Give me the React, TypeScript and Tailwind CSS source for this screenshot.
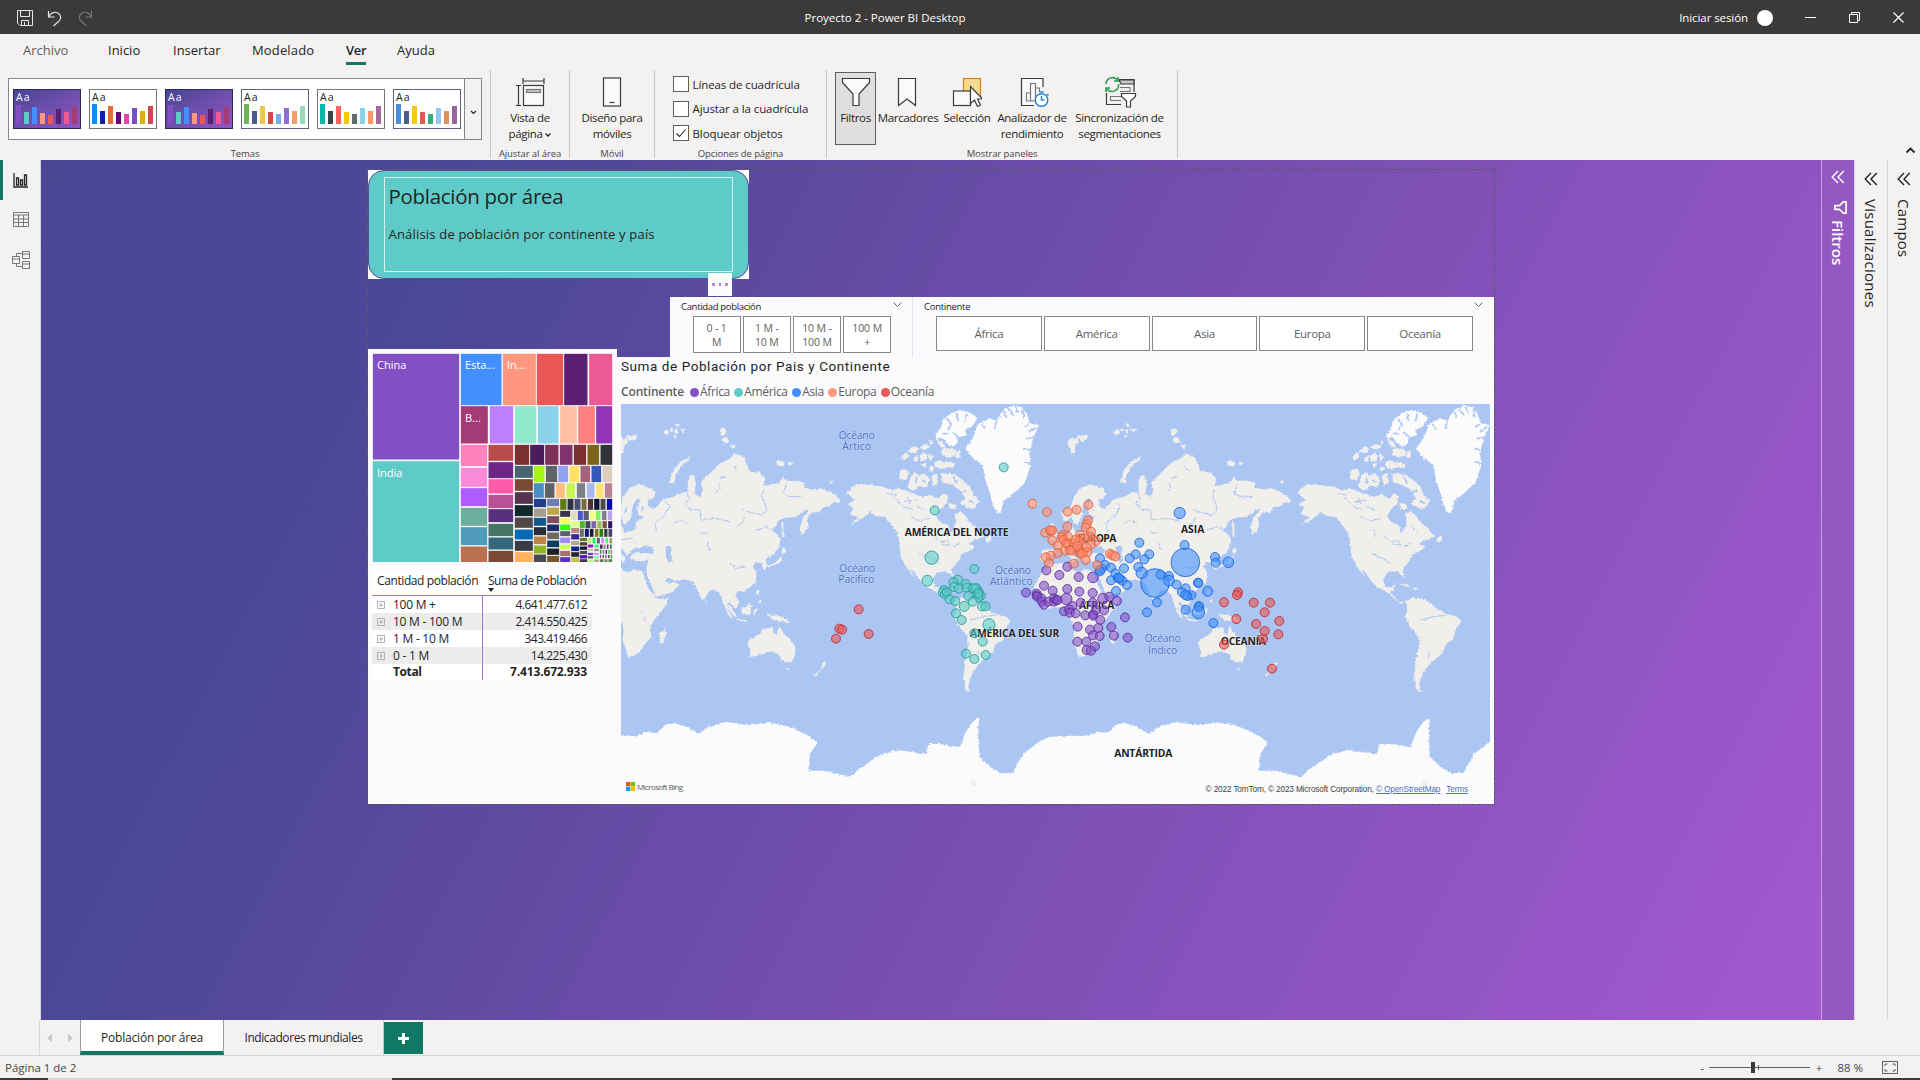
import React from "react";

const UI = "font-['Open_Sans']";

/* ---------- theme gallery ---------- */
const heights = [20, 13, 18, 12, 10, 16, 13, 18];
const themes: { dark: boolean; border: string; h: number[]; c: string[] }[] = [
  { dark: true, border: "#2f2a55", h: [19, 12, 17, 11, 9, 15, 12, 17], c: ["#8250c4", "#5ecbc8", "#438fff", "#ff977e", "#eb5757", "#5b2071", "#ec5a96", "#a43b76"] },
  { dark: false, border: "#777777", h: heights, c: ["#118dff", "#12239e", "#e66c37", "#6b007b", "#e044a7", "#744ec2", "#d9b300", "#d64550"] },
  { dark: true, border: "#2f2a55", h: [19, 12, 17, 11, 9, 15, 12, 17], c: ["#8250c4", "#5ecbc8", "#438fff", "#ff977e", "#eb5757", "#5b2071", "#ec5a96", "#a43b76"] },
  { dark: false, border: "#5c667a", h: heights, c: ["#70b35c", "#4a588a", "#ecc846", "#cd4c46", "#71afe2", "#8d6fd1", "#ee9e64", "#95dabb"] },
  { dark: false, border: "#777777", h: heights, c: ["#01b8aa", "#374649", "#fd625e", "#f2c80f", "#5f6b6d", "#8ad4eb", "#fe9666", "#a66999"] },
  { dark: false, border: "#5c667a", h: heights, c: ["#4a8ddc", "#4c5d8a", "#f3c911", "#dc5b57", "#33ae81", "#95c8f0", "#dd915f", "#9a64a0"] },
];

function Theme({ t }: { t: (typeof themes)[number] }) {
  return (
    <div
      className={
        "flex h-[40px] w-[68px] flex-col justify-between border px-[2px] pb-[4px] " +
        (t.dark ? "bg-gradient-to-br from-[#474694] to-[#9454c4] text-white" : "bg-white text-[#252423]")
      }
      style={{ borderColor: t.border }}
    >
      <span className={UI + " text-[10.5px] leading-[15px] tracking-[1px]"}>Aa</span>
      <div className="flex h-0 items-end gap-[3px]">
        {t.c.map((c, i) => (
          <span key={i} className="w-[5px] shrink-0" style={{ height: t.h[i], background: c }} />
        ))}
      </div>
    </div>
  );
}

/* ---------- ribbon pieces ---------- */
function Group({ w, label, children }: { w: number; label: string; children: React.ReactNode }) {
  return (
    <div className="flex h-[88px] flex-col border-r border-[#c8c6c4]" style={{ width: w }}>
      <div className="flex h-[76px] shrink-0 justify-center">{children}</div>
      <div className="shrink-0 text-center text-[9.5px] leading-[15px] tracking-[-0.1px] text-[#484644]">{label}</div>
    </div>
  );
}

function Big({ w, icon, lines, active, caret }: { w: number; icon: React.ReactNode; lines: string[]; active?: boolean; caret?: boolean }) {
  return (
    <div
      className={"mt-[2px] flex h-[73px] shrink-0 flex-col items-center border " + (active ? "border-[#605e5c] bg-[#e1dfdd]" : "border-transparent")}
      style={{ width: w }}
    >
      <div className="flex h-[37px] items-center">{icon}</div>
      {lines.map((l, i) => (
        <span key={l} className="flex items-center whitespace-nowrap text-[11.5px] leading-[16px] tracking-[-0.33px] text-[#252423]">
          {l}
          {caret && i === lines.length - 1 && (
            <svg width="8" height="6" viewBox="0 0 8 6" className="ml-px mt-[2px]"><path d="M1.500 1.500L4 4l2.500-2.500" fill="none" stroke="#252423" strokeWidth="1.300" /></svg>
          )}
        </span>
      ))}
    </div>
  );
}

function Check({ label, on }: { label: string; on?: boolean }) {
  return (
    <div className="flex h-[16px] items-center gap-[4px]">
      <span className="flex h-[16px] w-[16px] items-center justify-center border border-[#605e5c] bg-white">
        {on && <svg width="12" height="12" viewBox="0 0 12 12"><path d="M1.500 6.500l3 3 6-7" fill="none" stroke="#252423" strokeWidth="1.100" /></svg>}
      </span>
      <span className="whitespace-nowrap pt-px text-[11.5px] tracking-[-0.1px] text-[#252423]">{label}</span>
    </div>
  );
}

const S = { fill: "none", stroke: "#3b3a39", strokeWidth: 1.2 } as const;
const PageIcon = () => (
  <svg width="30" height="30" viewBox="0 0 30 30" {...S}>
    <path d="M8 1v6M29 1v6M8 4h21M1 8.500h5M1 28.500h5M3.500 8.500v20" />
    <rect x="8.500" y="8.500" width="20" height="20" fill="#fafafa" /><rect x="11.500" y="12.500" width="14" height="3" fill="#c8c6c4" stroke="#797775" />
  </svg>
);
const PhoneIcon = () => (
  <svg className="mr-[1px]" width="20" height="30" viewBox="0 0 20 30" {...S}><rect x="1.500" y="1" width="17" height="28" fill="#fafafa" /><path d="M7.500 25.500h5" /></svg>
);
const FunnelIcon = () => (
  <svg width="30" height="30" viewBox="0 0 30 30" {...S}><path d="M1.500 1.500h27v4L18 17v11.500h-6V17L1.500 5.500z" fill="#fafafa" /></svg>
);
const BookmarkIcon = () => (
  <svg className="mr-[2px]" width="20" height="30" viewBox="0 0 20 30" {...S}><path d="M1.500 1.500h17v27L10 22l-8.500 6.500z" fill="#fafafa" /></svg>
);
const SelectIcon = () => (
  <svg width="30" height="30" viewBox="0 0 30 30" {...S}>
    <rect x="11.500" y="1.500" width="17" height="18" fill="#f8db8f" stroke="#e07c1c" /><rect x="1.500" y="14" width="17" height="14.500" fill="#fafafa" />
    <path d="M18.500 9.500v17l4-3.500 3 6.500 3-1.500-3-6h5z" fill="#fff" />
  </svg>
);
const PerfIcon = () => (
  <svg className="ml-[3px]" width="30" height="30" viewBox="0 0 30 30" {...S}>
    <path d="M24 10V1.500H2.500v27H15" fill="#fafafa" /><path d="M7.500 24V16h4v8zM11.500 24V6.500h5V24zM16.500 18v-7h4v4" stroke="#797775" />
    <circle cx="22.500" cy="23" r="6.300" fill="#fff" stroke="#2b88d8" strokeWidth="1.500" /><path d="M22.500 19v4h3M20.500 15h4M28 17l1.500 1.500" stroke="#2b88d8" strokeWidth="1.500" />
  </svg>
);
const SyncIcon = () => (
  <svg width="34" height="32" viewBox="0 0 34 32" {...S}>
    <path d="M16 3.500h15V16M3.500 17v11.500H18" /><path d="M16 4h15v4H18z" fill="#c8c6c4" /><path d="M17 11.500h10v4H17M18 20.500H7.500v4H18" stroke="#797775" />
    <path d="M3 8a6.500 6.500 0 0 1 11.500-4M15 1v4h-4M15.500 8A6.500 6.500 0 0 1 4 13M3 16v-4h4" stroke="#2f9e54" strokeWidth="1.600" />
    <path d="M18.500 17.500h14v3L27.500 25v6h-4v-6l-5-4.500z" fill="#fff" />
  </svg>
);

/* ---------- treemap ---------- */
type R = [number, number, number, number, string, string?];
const cells: R[] = [
  [24, 27, 282, 343, "#8250c4", "China"], [24, 349, 282, 651, "#5ecbc8", "India"],
  [288, 27, 409, 180, "#438fff", "Esta..."], [414, 27, 512, 180, "#ff977e", "In..."], [516, 27, 594, 180, "#eb5757"], [598, 27, 667, 180, "#5b2071"], [673, 27, 741, 180, "#ec5a96"],
  [288, 184, 368, 295, "#a43b76", "B..."], [375, 184, 444, 295, "#bf7fff"], [450, 184, 513, 295, "#8feace"], [519, 184, 580, 295, "#89d2ea"], [586, 184, 635, 295, "#ffbfa5"], [640, 184, 689, 295, "#ff8080"], [694, 184, 741, 295, "#9433b5"],
];
const row = (y0: number, y1: number, l: [number, number, string][]) => l.forEach(([a, b, c]) => cells.push([a, y0, b, y1, c]));
const col = (x0: number, x1: number, l: [number, number, string][]) => l.forEach(([a, b, c]) => cells.push([x0, a, x1, b, c]));
col(288, 366, [[300, 363, "#fd82bd"], [369, 425, "#fd89da"], [430, 483, "#ae5cff"], [489, 542, "#6bae9c"], [547, 600, "#4f9abd"], [605, 651, "#bb704f"]]);
col(371, 444, [[300, 347, "#b94b4b"], [352, 399, "#6e2686"], [403, 445, "#fc5ca9"], [450, 489, "#bb5098"], [493, 531, "#57307d"], [537, 573, "#467467"], [578, 613, "#35687c"], [618, 651, "#7b4933"]]);
row(300, 359, [[450, 492, "#7c3032"], [496, 537, "#4b1c5c"], [541, 580, "#7e3158"], [585, 622, "#7f356c"], [627, 663, "#7c3032"], [668, 702, "#7c651b"], [707, 741, "#303436"]]);
col(450, 503, [[363, 398, "#476672"], [403, 437, "#7b4933"], [442, 476, "#55334c"], [481, 513, "#10282c"], [518, 548, "#524646"], [554, 583, "#0768b7"], [588, 617, "#363b47"], [622, 651, "#ffb25e"]]);
row(363, 411, [[507, 538, "#a8f515"], [543, 576, "#5f626b"], [580, 609, "#8fa3ee"], [614, 642, "#ffe163"], [647, 675, "#a6647c"], [680, 708, "#3658b8"], [713, 741, "#decfbd"]]);
row(415, 458, [[507, 536, "#4a90c4"], [540, 568, "#5d6268"], [573, 599, "#fdbd80"], [604, 630, "#c8f557"], [636, 660, "#7c8188"], [666, 688, "#a9b7ee"], [693, 715, "#ffe27a"], [720, 741, "#b98493"]]);
col(507, 543, [[462, 486, "#25408a"], [491, 515, "#a69d90"], [519, 542, "#135b8f"], [547, 570, "#26303c"], [575, 597, "#bd8348"], [602, 625, "#91b625"], [629, 651, "#464a55"]]);
col(547, 582, [[462, 483, "#6e7eb0"], [488, 509, "#bda54d"], [514, 534, "#7b4f60"], [539, 558, "#1a2b66"], [563, 582, "#6e675f"], [587, 606, "#0d3c63"], [611, 629, "#1b2027"], [633, 651, "#7b562d"]]);
row(462, 494, [[586, 604, "#5d7815"], [608, 625, "#303240"], [629, 646, "#455072"], [650, 664, "#7c6b38"], [669, 684, "#4f2f3b"], [688, 703, "#0d1830"], [707, 721, "#4c4a4e"], [726, 741, "#0807b8"]]);
col(586, 615, [[498, 515, "#39334a"], [519, 534, "#f7ff59"], [539, 555, "#38f80f"], [559, 573, "#5d5e70"], [578, 594, "#9d8bf0"], [599, 613, "#c9ff60"], [618, 633, "#a4746c"], [637, 651, "#5a35b8"]]);
row(498, 525, [[619, 635, "#deddc0"], [639, 653, "#4c54cd"], [656, 671, "#5d5c70"], [675, 689, "#f7ff7b"], [693, 706, "#7cf857"], [711, 724, "#807e8f"], [729, 741, "#b7a5f0"]]);
col(619, 642, [[529, 545, "#daff8c"], [549, 564, "#b48e86"], [568, 583, "#3e2590"], [588, 600, "#a9ab92"], [605, 618, "#172087"], [622, 635, "#252632"], [638, 651, "#bdc24a"]]);
row(529, 549, [[645, 659, "#4bb52b"], [662, 676, "#44475a"], [680, 693, "#7b66ab"], [697, 709, "#a0c04d"], [713, 725, "#7b5547"], [730, 741, "#2b165f"]]);
row(552, 575, [[645, 656, "#6b6f6c"], [660, 671, "#12196b"], [675, 685, "#1d1d25"], [690, 700, "#7d7a28"], [704, 714, "#2f7c14"], [718, 727, "#3a3a45"], [731, 741, "#4b446f"]]);
col(645, 666, [[579, 588, "#5c7a35"], [592, 601, "#5d3b36"], [605, 614, "#12142b"], [618, 627, "#4a4c3d"], [631, 640, "#4b0fb5"], [643, 651, "#423545"]]);
row(579, 595, [[669, 678, "#b5f070"], [683, 691, "#15f85a"], [696, 704, "#5d5e70"], [709, 717, "#d58cff"], [722, 729, "#4bff6e"], [734, 741, "#a99b5a"]]);
col(669, 684, [[599, 607, "#9a10b0"], [611, 618, "#c8cdb0"], [624, 630, "#7b35d0"], [634, 640, "#52566b"], [644, 651, "#b5ff80"]]);
col(688, 701, [[599, 607, "#3bff7b"], [612, 618, "#a58a80"], [624, 630, "#d58cff"], [634, 640, "#7cff90"], [644, 651, "#b5a58c"]]);
row(599, 611, [[705, 712, "#5a2065"], [716, 721, "#7d8a70"], [726, 730, "#9a10b0"], [735, 740, "#3a8a4a"]]);
row(615, 626, [[705, 709, "#36a04a"], [713, 718, "#a080c0"], [722, 726, "#4a4a50"], [730, 734, "#65c850"], [737, 741, "#8a8a8a"]]);
row(630, 639, [[705, 708, "#8a4070"], [713, 717, "#507050"], [721, 725, "#b05ac0"], [730, 733, "#333333"], [737, 741, "#50a050"]]);
row(643, 651, [[705, 715, "#607a55"], [719, 727, "#6d8a66"], [731, 741, "#557a50"]]);

function Treemap() {
  return (
    <svg className="absolute left-[372px] top-[353px]" width="241" height="209" viewBox="21 24 723 627">
      {cells.map(([a, b, c, d, f, t], i) => (
        <g key={i}>
          <rect x={a - 0.5} y={b - 0.5} width={c - a + 1} height={d - b + 1} fill={f} />
          {t && <text x={a + 12} y={b + 46} fontSize="33" fontWeight="500" fontFamily="Open Sans" fill="#fff">{t}</text>}
        </g>
      ))}
    </svg>
  );
}

/* ---------- map ---------- */
const EURASIA =
  "M-22,510 L-28,490 L0,470 L10,440 L28,415 L60,403 L95,414 L106,430 L98,448 L82,446 L88,470 L100,478 L118,462 L128,448 L160,440 L185,428 L205,425 L203,395 L212,375 L222,376 L228,400 L224,432 L240,440 L248,420 L242,400 L258,380 L278,362 L300,340 L330,325 L345,310 L372,322 L382,345 L390,362 L420,368 L436,385 L432,408 L450,405 L478,398 L490,380 L500,392 L530,392 L555,398 L550,412 L580,420 L600,415 L630,425 L648,438 L662,452 L655,460 L640,455 L632,468 L610,472 L598,486 L575,488 L562,505 L566,525 L556,545 L545,555 L540,530 L550,500 L568,480 L555,480 L530,500 L500,503 L478,510 L466,530 L458,542 L470,550 L482,570 L474,598 L460,615 L448,620 L436,628 L443,650 L432,660 L424,640 L408,636 L398,650 L410,670 L408,692 L395,708 L372,725 L356,722 L346,735 L358,755 L350,775 L335,765 L326,752 L320,772 L335,800 L338,812 L325,795 L313,768 L304,742 L290,722 L275,718 L262,732 L250,754 L240,740 L230,715 L222,700 L205,690 L190,690 L165,692 L140,680 L135,692 L150,700 L165,697 L178,705 L160,725 L125,737 L102,738 L88,715 L75,690 L76,668 L82,645 L86,628 L70,634 L45,633 L30,625 L35,610 L60,605 L52,592 L36,600 L20,618 L10,600 L-12,598 L18,625 L8,640 L-10,610 L-40,600 L-62,620 L-72,640 L-90,632 L-86,600 L-45,598 L-42,580 L-60,572 L-25,560 L0,545 L-4,520 L8,530 L12,548 L45,540 L48,515 L75,502 L55,495 L52,470 L62,448 L50,446 L36,472 L34,500 L22,520 L10,524 L4,498 L-12,512 Z";
const AFRICA =
  "M-68,645 L-30,640 L-10,640 L-4,655 L25,668 L40,658 L68,664 L78,692 L95,720 L104,742 L122,748 L146,744 L140,762 L120,790 L98,815 L90,838 L94,860 L78,880 L62,904 L42,918 L22,921 L18,900 L8,870 L12,830 L-5,800 L-8,782 L-20,772 L-48,772 L-78,778 L-106,740 L-108,705 L-88,670 Z";
const OTHER =
  "M118,850 L134,838 L138,850 L130,880 L120,880 Z M-62,570 L-45,566 L-40,548 L-52,520 L-62,522 L-58,545 Z M-80,555 L-66,555 L-66,538 L-78,540 Z M-130,462 L-118,450 L-100,452 L-98,464 L-112,474 Z " +
  "M490,590 L500,600 L492,612 L484,606 Z M486,616 L484,636 L460,646 L440,655 L446,646 L470,636 Z M484,512 L490,520 L492,560 L486,562 Z M256,750 L262,756 L258,765 Z M314,755 L330,768 L352,800 L344,800 L326,780 Z M350,806 L384,811 L382,815 L350,811 Z M364,775 L380,770 L392,760 L396,768 L388,796 L368,792 Z M402,778 L412,774 L405,795 L400,798 Z M408,716 L418,720 L416,736 L408,730 Z M414,750 L424,750 L422,760 Z M440,792 L470,795 L498,806 L512,820 L490,814 L462,812 Z M404,692 L408,698 L404,704 Z " +
  "M382,882 L387,868 L405,860 L420,850 L428,838 L440,835 L458,832 L460,848 L470,856 L478,828 L490,850 L510,868 L527,895 L524,918 L515,936 L500,938 L484,930 L474,912 L452,904 L425,912 L400,920 L388,920 L391,905 Z M498,955 L508,955 L503,963 Z M613,934 L619,943 L608,955 L585,981 L582,976 L600,960 Z " +
  "M148,398 L160,360 L180,335 L212,318 L206,330 L184,348 L166,378 L163,400 Z";
const AMERICA =
  "M680,428 L696,412 L712,402 L745,404 L790,410 L812,420 L840,416 L870,426 L905,440 L935,434 L955,446 L972,430 L985,440 L978,462 L960,480 L948,500 L962,516 L985,524 L992,548 L1000,540 L1008,515 L1004,492 L1022,484 L1040,500 L1052,520 L1068,532 L1092,560 L1060,572 L1045,580 L1065,592 L1042,606 L1026,610 L1020,628 L1006,645 L994,658 L1002,682 L990,674 L976,662 L950,668 L938,690 L945,712 L964,712 L974,698 L968,718 L958,726 L972,740 L985,755 L1004,758 L990,762 L968,742 L945,724 L915,708 L902,692 L884,668 L872,656 L884,684 L862,655 L842,622 L838,580 L830,545 L812,522 L795,500 L765,498 L750,485 L728,506 L690,525 L716,502 L690,492 L700,475 L684,462 L705,450 Z " +
  "M1005,755 L1025,742 L1060,748 L1098,775 L1120,790 L1160,800 L1172,814 L1155,840 L1148,870 L1126,882 L1118,905 L1098,925 L1080,940 L1062,962 L1050,985 L1045,1010 L1054,1028 L1036,1018 L1030,980 L1036,930 L1046,880 L1040,855 L1016,828 L1003,802 L1010,780 Z M980,700 L1010,704 L1020,712 L1000,708 Z M1028,712 L1046,716 L1030,720 Z M1096,566 L1112,556 L1114,574 L1098,576 Z " +
  "M838,388 L840,360 L860,356 L868,372 L858,390 Z M872,380 L884,366 L896,378 L912,368 L930,390 L920,412 L898,408 L880,422 L862,412 Z M935,378 L952,370 L954,400 L938,408 Z M962,368 L1005,374 L1028,390 L1050,410 L1058,432 L1078,452 L1060,478 L1038,472 L1020,460 L1036,445 L1018,418 L990,402 L968,398 Z M985,460 L1006,462 L1010,478 L990,476 Z";
const ARCTIC =
  "M846,322 L858,308 L868,318 L852,330 Z M866,304 L880,290 L896,296 L884,308 Z M884,322 L894,316 L892,334 L882,332 Z M900,318 L914,310 L922,318 L914,332 L902,334 Z M926,312 L938,320 L932,332 Z M905,344 L918,340 L914,352 Z M944,338 L958,332 L972,340 L988,336 L1002,342 L1002,352 L980,350 L962,356 L946,348 Z M952,268 L966,276 L976,292 L960,290 Z M966,300 L984,296 L1008,302 L1004,316 L986,322 L968,314 Z M900,292 L916,284 L930,290 L916,298 Z M930,270 L940,278 L932,284 Z M1010,306 L1020,302 L1018,322 L1008,322 Z M930,350 L940,352 L936,362 L928,360 Z " +
  "M-4,268 L6,262 L8,272 L20,262 L22,278 L12,284 L10,306 L2,312 L0,295 L-8,288 Z M22,256 L34,260 L50,254 L46,268 L34,272 L26,268 Z M130,246 L142,240 L146,248 L136,254 Z M148,238 L158,236 L156,246 Z M166,222 L178,224 L172,232 Z M164,240 L174,238 L172,250 L166,250 Z M180,238 L196,238 L188,246 Z M160,258 L170,256 L166,262 Z M302,238 L312,234 L318,242 L312,256 L302,254 Z M312,262 L322,264 L326,276 L314,278 L306,270 Z M330,286 L344,286 L340,296 Z M470,336 L480,332 L492,338 L490,348 L474,346 Z M504,338 L518,340 L508,346 Z M628,396 L638,394 L634,400 Z";
const ICE =
  "M1132,488 L1120,470 L1110,430 L1096,390 L1088,345 L1060,325 L1036,296 L1060,262 L1072,225 L1110,205 L1130,212 L1150,180 L1180,166 L1205,172 L1220,190 L1230,220 L1258,225 L1240,262 L1228,310 L1232,345 L1214,400 L1182,428 L1152,452 L1142,488 Z M946,252 L962,236 L966,212 L992,190 L1022,180 L1050,188 L1072,204 L1056,230 L1034,240 L1040,256 L1014,262 L1012,280 L996,290 L980,280 L966,262 L950,266 Z";
const ANT =
  "M-5,1157 L50,1158 L80,1145 L110,1150 L135,1125 L160,1118 L200,1130 L235,1152 L265,1130 L320,1115 L380,1125 L440,1118 L490,1125 L530,1140 L570,1160 L592,1180 L570,1210 L565,1262 L610,1262 L692,1280 L720,1255 L780,1215 L830,1200 L920,1212 L925,1182 L960,1182 L1020,1192 L1035,1150 L1058,1115 L1080,1100 L1074,1130 L1078,1220 L1110,1250 L1145,1270 L1178,1268 L1210,1212 L1250,1180 L1290,1160 L1358,1157 L1358,1420 L-5,1420 Z";
const WATER =
  "M56,596 L72,588 L92,590 L104,602 L96,612 L70,608 L60,612 Z M136,590 L150,586 L156,600 L150,612 L158,632 L148,640 L138,622 Z M68,664 L74,662 L92,700 L104,730 L100,736 L84,712 Z";
const FJORDS =
  "M1130,212 L1124,236 M1150,182 L1160,204 M1166,176 L1180,196 M1186,172 L1194,190 M1208,178 L1212,204 M1228,222 L1212,232 M1250,232 L1226,246 M1240,262 L1218,266 M1230,300 L1212,296 M1232,340 L1214,336 M1086,222 L1096,238 M980,205 L994,222 L984,240 M1010,190 L1014,214 M1040,190 L1034,214 M966,250 L986,252 M1014,262 L1000,246 M890,380 L886,400 M906,390 L918,396 M1000,380 L1010,400 M1040,420 L1024,428 M1062,460 L1046,452";
const RIVERS =
  "M200,430 L210,445 L196,460 L208,478 L240,480 L242,510 L290,505 L330,515 M365,478 L395,488 L425,495 L440,480 L436,462 L425,440 L432,420 M500,400 L490,430 L510,440 L545,440 M130,450 L150,470 L130,500 L105,520 L110,545 M160,520 L180,510 L200,520 M0,570 L30,565 L50,580 M370,500 L372,514 L350,530 M240,550 L262,548 M262,575 L268,600 M410,540 L440,530 L462,545 M285,430 L300,415 L296,400 M380,650 L350,655 L330,640 M60,790 L68,780 M72,800 L76,815 M820,440 L850,470 L880,480 M850,455 L890,450 M870,500 L900,512 L930,505 M940,560 L955,570 M960,575 L985,572 L990,585 L965,582 M1000,590 L1020,580 M900,610 L935,625 L960,640 M1050,810 L1090,800 L1130,795 M1075,900 L1072,925 M800,430 L830,436 M862,440 L870,462 M890,470 L912,480 M900,530 L915,545 L910,560 M1020,530 L1040,545 M1060,480 L1080,492 M20,470 L14,490 M70,470 L66,484 M300,385 L320,380 M340,350 L356,362";

type B = [number, number, number?];
const bubbles: { fill: string; stroke: string; dx: number; p: B[] }[] = [
  { fill: "#5ecbc8", stroke: "#1f9a93", dx: 0, p: [[944, 481], [1151, 352], [935, 623, 20], [922, 692, 16], [1063, 657], [1014, 689], [1000, 697], [1002, 711], [1017, 716], [1038, 702], [1040, 713], [1058, 715], [1070, 715], [1075, 725], [1065, 715], [1078, 733], [1083, 737], [1075, 742], [1045, 738], [1058, 755], [1075, 730], [972, 720], [968, 727], [975, 733], [980, 727], [989, 748], [1006, 753], [1033, 769, 15], [1086, 769], [1097, 769], [1008, 790], [1025, 810], [1107, 824, 18], [1063, 850], [1088, 875], [1038, 911], [1063, 927], [1097, 915]] },
  { fill: "#eb5757", stroke: "#c02428", dx: 0, p: [[716, 778], [658, 836], [666, 839], [648, 866], [746, 852]] },
  { fill: "#eb5757", stroke: "#c02428", dx: 1140, p: [[672, 757], [714, 727], [711, 735], [761, 758], [810, 758], [794, 787], [709, 807], [768, 822], [838, 813], [794, 843], [835, 853], [789, 867], [672, 884], [816, 956]] },
  { fill: "#8250c4", stroke: "#5a2ba0", dx: 1140, p: [[139, 661], [202, 650], [178, 675], [236, 681], [279, 682, 16], [132, 707], [158, 722], [202, 717], [238, 725], [278, 729], [78, 728], [110, 731], [110, 737], [112, 740], [124, 745], [126, 755], [132, 764], [145, 755], [162, 745], [162, 755], [168, 750], [173, 750], [199, 747, 17], [217, 768], [242, 758], [278, 758], [309, 746, 16], [328, 740], [351, 753], [192, 784], [207, 778], [210, 788], [227, 790], [256, 796], [279, 793], [280, 797], [288, 780], [312, 781], [301, 810], [375, 802], [233, 830], [270, 839], [295, 834], [334, 831], [279, 856], [299, 858], [342, 857], [383, 863], [232, 875], [259, 875], [285, 889], [260, 900], [273, 902]] },
  { fill: "#438fff", stroke: "#1766d6", dx: 1140, p: [[556, 637, 43], [465, 699, 43], [539, 489, 17], [554, 585], [418, 578], [407, 613], [389, 625], [448, 613], [433, 628], [300, 625], [315, 645], [299, 660], [305, 656], [300, 664], [333, 653], [346, 670], [372, 655], [415, 651], [425, 669, 17], [333, 691], [353, 683], [358, 686], [367, 692], [358, 684], [381, 705], [348, 723], [482, 674], [507, 678], [507, 692, 16], [530, 704], [557, 715], [546, 727], [574, 735], [562, 738], [556, 735], [594, 698], [595, 699], [623, 724, 15], [645, 621], [647, 638], [685, 637, 16], [471, 757], [441, 787], [557, 779], [597, 768], [596, 772], [595, 787, 19], [640, 819]] },
  { fill: "#ff8a6c", stroke: "#dc5f3c", dx: 1140, p: [[97, 461], [141, 486], [203, 485], [230, 479], [265, 464], [264, 511], [260, 523], [257, 532], [202, 530], [136, 548], [150, 542], [157, 542], [152, 541], [157, 571], [188, 555], [186, 562], [204, 560], [190, 570], [173, 587], [195, 602], [200, 580], [205, 583], [220, 580], [240, 555], [273, 545], [270, 560], [255, 565], [288, 573], [240, 576], [235, 572], [273, 584], [223, 590], [210, 600], [215, 602], [240, 600], [238, 608], [242, 607], [250, 607], [262, 607], [245, 612], [257, 630], [222, 641], [292, 645, 13], [173, 609], [152, 617], [137, 622], [147, 639], [330, 611], [337, 616], [346, 619], [260, 591], [226, 570], [232, 588]] },
];

const labels: [number, number, string, boolean][] = [
  [710, 266, "Océano", false], [710, 300, "Ártico", false], [712, 665, "Océano", false], [709, 699, "Pacífico", false], [1179, 673, "Océano", false], [1174, 706, "Atlántico", false],
  [1628, 876, "Océano", false], [1628, 911, "Índico", false],
  [1010, 559, "AMÉRICA DEL NORTE", true], [1184, 860, "AMÉRICA DEL SUR", true], [1430, 575, "EUROPA", true], [1718, 549, "ASIA", true], [1430, 776, "ÁFRICA", true], [1870, 884, "OCEANÍA", true], [1570, 1222, "ANTÁRTIDA", true],
];
const widths: Record<string, number> = { "AMÉRICA DEL NORTE": 312, "AMÉRICA DEL SUR": 268, EUROPA: 118, ASIA: 70, "ÁFRICA": 106, "OCEANÍA": 136, "ANTÁRTIDA": 175, "Océano": 108, "Ártico": 86, "Pacífico": 108, "Atlántico": 128, "Índico": 88 };

function WorldMap() {
  return (
    <svg className="block" width="869" height="395" viewBox="3 162 2607 1185">
      <defs>
        <filter id="coast" x="-5%" y="-5%" width="110%" height="110%">
          <feTurbulence type="fractalNoise" baseFrequency="0.13" numOctaves="3" seed="4" result="n" />
          <feDisplacementMap in="SourceGraphic" in2="n" scale="10" xChannelSelector="R" yChannelSelector="G" />
        </filter>
        <g id="world" strokeLinejoin="round">
          <path d={EURASIA + AFRICA + OTHER + AMERICA} fill="#f0efec" />
          <path d={ARCTIC} fill="#f0efec" stroke="#f0efec" strokeWidth="3" />
          <path d={ICE + ANT} fill="#fbfbfb" />
          <path d={WATER} fill="#abc6f2" />
          <path d={FJORDS} fill="none" stroke="#abc6f2" strokeWidth="5" />
          <path d={RIVERS} fill="none" stroke="#abc6f2" strokeWidth="3" />
        </g>
      </defs>
      <rect x="0" y="160" width="2620" height="1200" fill="#abc6f2" />
      <g filter="url(#coast)">
        <use href="#world" x="-1352" /><use href="#world" /><use href="#world" x="1352" />
      </g>
      <rect x="1052" y="1292" width="18" height="16" fill="#eeeeee" /><rect x="2404" y="1292" width="18" height="16" fill="#eeeeee" />
      {labels.map(([x, y, t, b], i) =>
        b ? (
          <text key={i} x={x} y={y} textAnchor="middle" fontFamily="Open Sans" fontSize="31" fontWeight="700" fill="#222" textLength={widths[t]} stroke="#fff" strokeWidth="3" strokeOpacity="0.6" paintOrder="stroke">{t}</text>
        ) : (
          <text key={i} x={x} y={y} textAnchor="middle" fontFamily="Open Sans" fontSize="31" fontWeight="500" fill="#4e6fc4" textLength={widths[t]} stroke="#d5e2f9" strokeWidth="3" strokeOpacity="0.6" paintOrder="stroke">{t}</text>
        )
      )}
      {bubbles.map((g, i) => (
        <g key={i} fill={g.fill} stroke={g.stroke} strokeWidth="2.800" fillOpacity="0.6" strokeOpacity="0.9">
          {g.p.map(([x, y, r], j) => <circle key={j} cx={x + g.dx} cy={y} r={r ?? 13.5} />)}
        </g>
      ))}
    </svg>
  );
}

const Chev = () => <svg width="9" height="6" viewBox="0 0 9 6"><path d="M.700.700L4.500 4.500 8.300.700" fill="none" stroke="#605e5c" /></svg>;

function Pane({ label, filter, w }: { label: string; filter?: boolean; w: number }) {
  const c = filter ? "#fff" : "#252423";
  return (
    <div className={"flex shrink-0 flex-col items-center border-l " + (filter ? "border-[#c9a6e2] bg-[#9557c2] pt-[10px]" : "border-[#d8d6d4] bg-[#f3f2f1] pt-[12px]")} style={{ width: w }}>
      <svg width="14" height="14" viewBox="0 0 14 14"><path d="M7 1L1.200 7 7 13M12.800 1L7 7l5.800 6" fill="none" stroke={c} strokeWidth="1.400" /></svg>
      {filter && <svg className="ml-[4px] mt-[17px]" width="13" height="13" viewBox="0 0 14 14"><path d="M13 1v12h-3L6 9H1V5h5l4-4z" fill="none" stroke="#fff" strokeWidth="1.800" /></svg>}
      <span className={"text-[15px] leading-[20px] [writing-mode:vertical-rl] " + (filter ? "mt-[6px] font-semibold tracking-[0px] text-white" : "mt-[13px] font-medium tracking-[0.250px] text-[#252423]")}>{label}</span>
    </div>
  );
}

const rows: [string, string][] = [["100 M +", "4.641.477.612"], ["10 M - 100 M", "2.414.550.425"], ["1 M - 10 M", "343.419.466"], ["0 - 1 M", "14.225.430"]];
const legend: [string, string][] = [["África", "#8250c4"], ["América", "#5ecbc8"], ["Asia", "#438fff"], ["Europa", "#ff977e"], ["Oceanía", "#eb5757"]];
const amounts: [string, string][] = [["0 - 1", "M"], ["1 M -", "10 M"], ["10 M -", "100 M"], ["100 M", "+"]];

export default function App() {
  return (
    <div className={UI + " flex h-[1080px] w-[1920px] flex-col overflow-hidden bg-[#f3f2f1] text-[#252423]"}>
      <header className="grid h-[34px] shrink-0 grid-cols-3 items-center bg-[#3b3a39] text-[11.5px] tracking-[-0.15px] text-white">
        <div className="flex gap-[14px] pl-[17px] pt-[2px]">
          <svg width="16" height="16" viewBox="0 0 16 16" fill="none" stroke="#e8e8e8"><path d="M.500.500h15v15H3L.500 13zM3.500.500v6h9v-6M4.500 15.500v-5h7v5M7.500 12v3" /></svg>
          <svg width="16" height="17" viewBox="0 0 16 17" fill="none" stroke="#e8e8e8" strokeWidth="1.200"><path d="M1.500 1v6h6M1.800 6.500C4 2.500 8 1 11.500 3.500s2.500 6-.5 8.500L6.500 16" /></svg>
          <svg width="16" height="17" viewBox="0 0 16 17" fill="none" stroke="#797775" strokeWidth="1.200"><path d="M14.500 1v6h-6M14.200 6.500C12 2.500 8 1 4.500 3.500S2 9.500 5 12l4.500 4" /></svg>
        </div>
        <div className="pr-[150px] pt-px text-center tracking-[-0.02px]">Proyecto 2 - Power BI Desktop</div>
        <div className="flex items-center justify-end pr-[16px] pt-px">
          <span className="tracking-[-0.08px]">Iniciar sesión</span>
          <span className="ml-[9px] mr-[32px] h-[16px] w-[16px] rounded-full bg-white" />
          <svg className="mr-[33px]" width="11" height="11" viewBox="0 0 11 11"><path d="M0 5.500h11" stroke="#fff" /></svg>
          <svg className="mr-[33px]" width="11" height="11" viewBox="0 0 11 11" fill="none" stroke="#fff"><path d="M.500 2.500h8v8h-8zM2.500 2.500v-2h8v8h-2" /></svg>
          <svg width="11" height="11" viewBox="0 0 11 11"><path d="M.500.500l10 10M10.500.500l-10 10" stroke="#fff" strokeWidth="1.200" /></svg>
        </div>
      </header>

      <nav className="flex h-[36px] shrink-0 items-start pl-[23px] pt-[5px] text-[13px] leading-[22px] tracking-[0px]">
        <span className="w-[85px] text-[#605e5c]">Archivo</span>
        <span className="w-[65px]">Inicio</span>
        <span className="w-[79px]">Insertar</span>
        <span className="w-[94px] tracking-[0.15px]">Modelado</span>
        <span className="w-[51px] font-semibold tracking-[-0.3px]"><span className="inline-block h-[26px] border-b-[3px] border-[#117865]">Ver</span></span>
        <span>Ayuda</span>
      </nav>

      <section className="flex h-[90px] shrink-0 justify-between">
        <div className="flex">
          <Group w={491} label="Temas">
            <div className="mt-[8px] flex h-[62px] w-[474px] border border-[#8a8886] bg-white">
              <div className="flex flex-1 gap-[8px] pl-[4px] pt-[10px]">{themes.map((t, i) => <Theme key={i} t={t} />)}</div>
              <div className="flex w-[17px] items-center justify-center border-l border-[#8a8886] bg-[#f3f2f1] pt-[6px]">
                <svg width="7" height="5" viewBox="0 0 7 5"><path d="M1 1l2.500 2.500L6 1" fill="none" stroke="#252423" strokeWidth="1.200" /></svg>
              </div>
            </div>
          </Group>
          <Group w={79} label="Ajustar al área"><Big w={70} icon={<PageIcon />} lines={["Vista de", "página"]} caret /></Group>
          <Group w={85} label="Móvil"><Big w={76} icon={<PhoneIcon />} lines={["Diseño para", "móviles"]} /></Group>
          <Group w={172} label="Opciones de página">
            <div className="flex w-[136px] flex-col gap-[8.500px] pt-[6px]"><Check label="Líneas de cuadrícula" /><Check label="Ajustar a la cuadrícula" /><Check label="Bloquear objetos" on /></div>
          </Group>
          <Group w={351} label="Mostrar paneles">
            <div className="flex w-full pl-[8px]">
              <Big w={41} icon={<FunnelIcon />} lines={["Filtros"]} active />
              <Big w={64} icon={<BookmarkIcon />} lines={["Marcadores"]} />
              <Big w={54} icon={<SelectIcon />} lines={["Selección"]} />
              <Big w={76} icon={<PerfIcon />} lines={["Analizador de", "rendimiento"]} />
              <Big w={99} icon={<SyncIcon />} lines={["Sincronización de", "segmentaciones"]} />
            </div>
          </Group>
        </div>
        <svg className="mr-[4px] mt-[76px]" width="11" height="8" viewBox="0 0 11 8"><path d="M1.500 6.500l4-4 4 4" fill="none" stroke="#252423" strokeWidth="1.800" /></svg>
      </section>

      <main className="flex h-[860px] shrink-0">
        <aside className="flex w-[41px] shrink-0 flex-col items-start border-r border-[#d8d6d4]">
          <div className="flex h-[40px] w-full items-center border-l-[3px] border-[#117865] pl-[10px]">
            <svg width="15" height="15" viewBox="0 0 15 15" fill="none" stroke="#252423" strokeWidth="1.300"><path d="M1 0v14h14M3.500 12V5h2v7zM7.500 12V7h2v5zM11.500 12V2h2v10z" /></svg>
          </div>
          <svg className="ml-[13px] mt-[12px]" width="16" height="15" viewBox="0 0 16 15" fill="none" stroke="#797775"><path d="M.500.500h15v14H.500zM.500 3h15M.500 7h15M.500 10.500h15M5.500 3v11.500M10.500 3v11.500" /></svg>
          <svg className="ml-[12px] mt-[24px]" width="18" height="18" viewBox="0 0 18 18" fill="none" stroke="#797775"><path d="M.500 5.500h7v7h-7zM.500 8h7M10.500.500h7v7h-7zM10.500 3h7M10.500 10.500h7v7h-7zM10.500 13h7M4.500 5.500v-3h6M4.500 12.500v3h6" /></svg>
        </aside>

        <div className="relative flex-1 overflow-hidden bg-[linear-gradient(117deg,#4a4694_0%,#4c4796_22%,#6a4ca8_45%,#8852bc_72%,#a058cf_97%)]">
          <div className="absolute -left-[41px] -top-[160px] h-[1080px] w-[1920px]">
            <div className="absolute left-[367px] top-[169px] h-[636px] w-[1128px] border border-dashed border-[#5a5a5a]" />
            {/* title card */}
            <div className="absolute left-[368px] top-[170px] h-[109px] w-[381px] bg-[#fbfbfd]">
              <div className="h-full rounded-[16px] border border-[#5a4a9e] bg-[#5ecbc8] px-[15px] py-[6px]">
                <div className="h-[95px] w-[349px] border border-[#d5f1f0] pl-[3.500px] pt-[3px]">
                  <div className="text-[20.5px] leading-[30px] tracking-[-0.3px]">Población por área</div>
                  <div className="mt-[10px] text-[13px] leading-[26px] tracking-[0.190px]">Análisis de población por continente y país</div>
                </div>
              </div>
            </div>
            <div className="absolute left-[708px] top-[273px] flex h-[23px] w-[24px] items-center justify-center gap-[4px] bg-[#fbfbfd]">
              <i className="size-[2.500px] bg-[#b18ae0]" /><i className="size-[2.500px] bg-[#b18ae0]" /><i className="size-[2.500px] bg-[#b18ae0]" />
            </div>
            {/* slicers */}
            <div className="absolute left-[670px] top-[297px] flex h-[61px] w-[824px] border-b border-[#e3e0f0] bg-[#fbfbfd]">
              <div className="w-[243px] border-r border-[#e3e0f0] pl-[11px] pr-[10px]">
                <div className="flex h-[19px] items-center justify-between text-[9.500px] font-medium tracking-[-0.320px]"><span className="pt-px">Cantidad población</span><span className="-mt-[4px]"><Chev /></span></div>
                <div className="flex gap-[2px] pl-[11.500px]">
                  {amounts.map(([a, b]) => (
                    <div key={a} className="flex h-[37px] w-[48.200px] flex-col items-center justify-center whitespace-nowrap border border-[#8a8886] bg-white text-[10.500px] leading-[14px] tracking-[-0.1px] text-[#605e5c]"><span>{a}</span><span>{b}</span></div>
                  ))}
                </div>
              </div>
              <div className="flex-1 pl-[11px] pr-[11px]">
                <div className="flex h-[19px] items-center justify-between text-[9.500px] font-medium tracking-[-0.280px]"><span className="pt-px">Continente</span><span className="-mt-[4px]"><Chev /></span></div>
                <div className="flex gap-[2px] pl-[12px]">
                  {["África", "América", "Asia", "Europa", "Oceanía"].map((t) => (
                    <div key={t} className="flex h-[35px] w-[105.800px] items-center justify-center border border-[#8a8886] bg-white text-[11.500px] tracking-[-0.3px] text-[#605e5c]">{t}</div>
                  ))}
                </div>
              </div>
            </div>
            {/* treemap and matrix */}
            <div className="absolute left-[368px] top-[349px] h-[455px] w-[249px] bg-[#fbfbfd]" />
            <Treemap />
            <div className="absolute left-[372px] top-[571px] w-[220px] bg-white text-[12px] leading-[16px] tracking-[-0.4px]">
              <div className="flex h-[25px] border-b border-[#a077d6] pt-[2px]">
                <span className="w-[116px] pl-[5px]">Cantidad población</span>
                <span className="relative whitespace-nowrap tracking-[-0.5px]">Suma de Población<i className="absolute left-0 top-[15px] border-x-[3.500px] border-t-[4px] border-x-transparent border-t-[#252423]" /></span>
              </div>
              {rows.map(([a, b], i) => (
                <div key={a} className={"flex h-[17px] items-center " + (i % 2 ? "bg-[#ececec]" : "")}>
                  <span className="flex h-full w-[111px] items-center gap-[8px] border-r border-[#a077d6] pl-[5px] tracking-[-0.25px]">
                    <svg width="8" height="8" viewBox="0 0 8 8" fill="none" stroke="#b3b0ad"><path d="M.500.500h7v7h-7zM2 4h4M4 2v4" /></svg>{a}
                  </span>
                  <span className="flex-1 pr-[5px] text-right tracking-[-0.5px]">{b}</span>
                </div>
              ))}
              <div className="flex h-[16px] items-center font-bold">
                <span className="flex h-full w-[111px] items-center border-r border-[#a077d6] pl-[21px]">Total</span><span className="flex-1 pr-[5px] text-right tracking-[-0.150px]">7.413.672.933</span>
              </div>
            </div>
            {/* map */}
            <div className="absolute left-[617px] top-[357px] flex h-[447px] w-[877px] flex-col bg-[#fbfbfd] pl-[4px]">
              <div className="font-['Roboto'] text-[13.500px] leading-[18px] tracking-[0.570px]">Suma de Población por Pais y Continente</div>
              <div className="mb-[2px] mt-[7px] flex h-[20px] items-center gap-[4.500px] text-[12px] tracking-[-0.350px] text-[#605e5c]">
                <b className="mr-[1.500px] font-semibold tracking-[-0.150px]">Continente</b>
                {legend.map(([t, c]) => <span key={t} className="flex items-center gap-[1px]"><i className="size-[9px] rounded-full" style={{ background: c }} />{t}</span>)}
              </div>
              <div className="relative h-[400px]">
                <WorldMap />
                <div className="absolute bottom-[13px] left-[5px] flex items-center gap-[2px] text-[8px] leading-none tracking-[-0.600px] text-[#605e5c]">
                  <svg width="9" height="9" viewBox="0 0 9 9"><path fill="#f25022" d="M0 0h4.300v4.300H0z" /><path fill="#7fba00" d="M4.700 0H9v4.300H4.700z" /><path fill="#00a4ef" d="M0 4.700h4.300V9H0z" /><path fill="#ffb900" d="M4.700 4.700H9V9H4.700z" /></svg>Microsoft Bing
                </div>
                <div className="absolute bottom-[9px] right-[26px] whitespace-nowrap font-['Liberation_Sans'] text-[8.250px] leading-[10px] tracking-[-0.150px] text-[#444]">
                  © 2022 TomTom, © 2023 Microsoft Corporation, <u className="text-[#4e6fc4]">© OpenStreetMap</u><u className="ml-[6px] text-[#4e6fc4]">Terms</u>
                </div>
              </div>
            </div>
          </div>
        </div>
        <Pane label="Filtros" filter w={33} />
        <Pane label="Visualizaciones" w={33} />
        <Pane label="Campos" w={33} />
      </main>

      <div className="flex h-[36px] shrink-0 border-b border-[#d8d6d4] text-[12px] tracking-[-0.2px]">
        <div className="w-[40px] border-r border-[#d8d6d4]" />
        <div className="flex w-[40px] items-center justify-between pl-[7px] pr-[7px]">
          <i className="border-y-4 border-r-[5px] border-y-transparent border-r-[#c8c6c4]" /><i className="border-y-4 border-l-[5px] border-y-transparent border-l-[#c8c6c4]" />
        </div>
        <div className="flex w-[144px] items-center justify-center border-x border-b-4 border-x-[#a19f9d] border-b-[#117865] bg-white pt-[5px]">Población por área</div>
        <div className="flex w-[160px] items-center justify-center border-r border-[#c8c6c4] tracking-[-0.420px]">Indicadores mundiales</div>
        <div className="mt-[2px] flex h-[32px] w-[39px] items-center justify-center bg-[#117865]"><svg width="11" height="11" viewBox="0 0 11 11"><path d="M5.500 0v11M0 5.500h11" stroke="#fff" strokeWidth="3" /></svg></div>
      </div>
      <footer className="flex h-[22px] shrink-0 items-center justify-between pl-[5px] pr-[22px] pt-px text-[11.500px] tracking-[-0.02px] text-[#484644]">
        <span>Página 1 de 2</span>
        <div className="flex items-center">
          <span>-</span>
          <span className="ml-[5px] flex h-[12px] w-[101px] items-center">
            <i className="h-px w-[42px] bg-[#605e5c]" /><i className="h-[11px] w-[4px] bg-[#3b3a39]" /><i className="h-px w-[3px] bg-[#605e5c]" /><i className="h-[5px] w-px bg-[#605e5c]" /><i className="h-px flex-1 bg-[#605e5c]" />
          </span>
          <span className="ml-[6px]">+</span><span className="ml-[15px]">88 %</span>
          <svg className="ml-[19px]" width="16" height="13" viewBox="0 0 16 13" fill="none" stroke="#605e5c"><path d="M.500.500h15v12H.500zM3 5V3h2.500M10.500 3H13v2M13 8v2h-2.500M5.500 10H3V8" /></svg>
        </div>
      </footer>
      <div className="flex h-[2px] bg-[#3b3a39]"><i className="ml-[48px] h-full w-[344px] bg-[#d8d6d4]" /></div>
    </div>
  );
}
